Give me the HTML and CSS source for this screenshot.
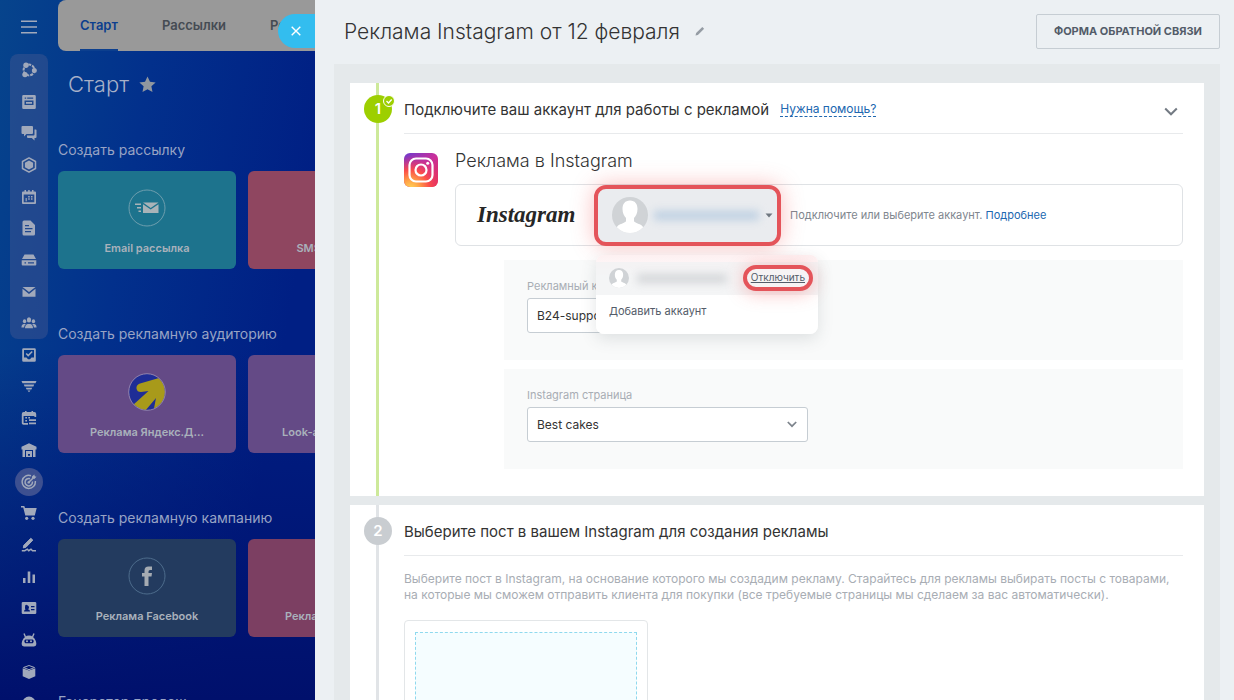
FILE: index.html
```html
<!DOCTYPE html>
<html lang="ru">
<head>
  <meta charset="UTF-8" />
  <title>Реклама Instagram</title>
  <link rel="stylesheet" href="styles.css">
</head>
<body>
  <nav class="rail">
    <a href="#" class="rail-menu" aria-label="Меню">
      <svg viewBox="0 0 14 12"><path d="M0 1h14M0 6h14M0 11h14" stroke="currentColor" stroke-width="1.4"/></svg>
    </a>
    <div class="rail-group">
      <a href="#"><svg viewBox="0 0 16 16"><circle cx="8" cy="8" r="5.4" fill="none" stroke="currentColor" stroke-width="2" stroke-dasharray="3 1"/><circle cx="5" cy="3.2" r="2.7"/><circle cx="13.3" cy="8.6" r="2.5"/><circle cx="4" cy="12.6" r="2.7"/><circle cx="8" cy="8" r="2.6" fill="#254b8c"/></svg></a>
      <a href="#"><svg viewBox="0 0 16 16"><path fill-rule="evenodd" d="M2.500 1h11q1.300 0 1.300 1.300v11.400q0 1.300-1.300 1.300h-11q-1.300 0-1.300-1.300V2.300Q1.200 1 2.500 1zM3.700 3.500v1.300h1.500V3.500zm2.500 0v1.300h6V3.500zM3.500 6.500V11h9V6.500zM5 8h6v1.700H5z"/></svg></a>
      <a href="#"><svg viewBox="0 0 16 16"><path d="M1.500 1h9.500q1 0 1 1v6q0 1-1 1H5.500L3 11.500V9H1.500q-1 0-1-1V2q0-1 1-1zM13.500 4.500h1.200q.8 0 .8.800V12q0 1-1 1h-1v2.500L10.800 13H7q-1 0-1-1v-1.500h6.500q1 0 1-1z"/></svg></a>
      <a href="#"><svg viewBox="0 0 16 16"><path d="M8 .9l6.500 3.600v7L8 15.100l-6.500-3.600v-7z" fill="none" stroke="currentColor" stroke-width="1.500" stroke-linejoin="round"/><path d="M8 3.500l4.100 2.300v4.400L8 12.500l-4.100-2.300V5.800z"/></svg></a>
      <a href="#"><svg viewBox="0 0 16 16"><path fill-rule="evenodd" d="M2 2.500h1.500V1H5v1.500h2.200V1h1.500v1.500H11V1h1.500v1.500H14q1 0 1 1V14q0 1-1 1H2q-1 0-1-1V3.500q0-1 1-1zM2.700 5.500v7.800h10.600V5.500z"/><path d="M4.500 9.200H6v1.500H4.500zM7.200 9.200h1.500v1.500H7.200zM7.200 7h1.500v1.500H7.200zM10 7h1.500v1.500H10zM10 9.200h1.500v1.500H10zM4.500 11.300H6v1H4.500z"/></svg></a>
      <a href="#"><svg viewBox="0 0 16 16"><path fill-rule="evenodd" d="M3 .5h6.500L14 5v9q0 1.500-1.500 1.500H3q-1.500 0-1.500-1.500V2Q1.500.5 3 .5zM4 5v1.300h4V5zm0 3v1.300h7.500V8zm0 3v1.300h6V11z"/></svg></a>
      <a href="#"><svg viewBox="0 0 16 16"><path fill-rule="evenodd" d="M3.500 2.500h9L15 7H1zM.7 8.300h14.600v4.200q0 1-1 1H1.700q-1 0-1-1zM3.500 10.300v1.300H5v-1.300zm3.500 0v1.300h6v-1.300z"/></svg></a>
      <a href="#"><svg viewBox="0 0 16 16"><path d="M1.500 3h13L8 8zM1.500 4.800L8 10l6.500-5.200v8h-13z"/></svg></a>
      <a href="#"><svg viewBox="0 0 18 16"><ellipse cx="9" cy="4.500" rx="2.400" ry="3"/><path d="M4.500 14q0-4 3-5h3q3 1 3 5z"/><ellipse cx="4" cy="6" rx="1.900" ry="2.300"/><path d="M.5 13q0-3.500 2.500-4h2.500q-2 1.500-2 4z"/><ellipse cx="14" cy="6" rx="1.900" ry="2.300"/><path d="M17.500 13q0-3.500-2.500-4h-2.500q2 1.500 2 4z"/></svg></a>
    </div>
    <div class="rail-list">
      <a href="#"><svg viewBox="0 0 16 16"><path fill-rule="evenodd" d="M2.500 1.200h11q1.300 0 1.300 1.300v11q0 1.300-1.300 1.300h-11q-1.300 0-1.300-1.300v-11q0-1.300 1.300-1.300zM3 3v7.500h2.500L7 12.300h2l1.500-1.800H13V3z"/><path d="M5.200 6.500l2 2 4-4" fill="none" stroke="currentColor" stroke-width="1.600"/></svg></a>
      <a href="#"><svg viewBox="0 0 16 16"><path d="M.5 3h15l-1 2.200h-13zM2.800 6.500h10.400l-.8 1.900H3.600zM4.800 9.700h6.400l-.8 1.800H5.600zM6.500 12.600h3L8 14.300z"/></svg></a>
      <a href="#"><svg viewBox="0 0 16 16"><path d="M7 13.800H2.600q-.9 0-.9-.9V4q0-1 1-1h10.600q1 0 1 1v3M2 5h12" fill="none" stroke="currentColor" stroke-width="1.800"/><path d="M4 1h1.600v3H4zM10.500 1h1.600v3h-1.600zM4.300 7H6v1.500H4.300zM7.300 7H9v1.500H7.300zM4.300 10H6v1.500H4.300zM8 9.300h7V11H8zM8 12.500h7v1.700H8z"/></svg></a>
      <a href="#"><svg viewBox="0 0 16 16"><path fill-rule="evenodd" d="M8 1.200l7.500 3.500V7.500h-1V15H12V8H4v7H1.500V7.500h-1V4.700z"/><path fill-rule="evenodd" d="M5 9h6v6H5zm2 3v1.800h2V12z"/></svg></a>
      <a href="#" class="active"><svg viewBox="0 0 16 16"><g fill="none" stroke="currentColor" stroke-width="1.500"><path d="M10 1.700A6.600 6.600 0 1 0 14.300 7"/><path d="M9 4.700A3.700 3.700 0 1 0 11.400 7.500"/><path d="M7.700 8.400l4.200-4.200"/></g><path d="M11 4.500V2.600L13.300.5l.5 1.700 1.700.6-2.200 2.300z"/><circle cx="7.700" cy="8.400" r="1.200"/></svg></a>
      <a href="#"><svg viewBox="0 0 16 16"><path d="M0 1h3.300l.7 2h11.700l-1.900 7.500H4.300L2.200 2.500H0z"/><circle cx="5.700" cy="13.300" r="1.600"/><circle cx="12" cy="13.300" r="1.600"/></svg></a>
      <a href="#"><svg viewBox="0 0 16 16"><path d="M9.800 1.300l2 1.800L5 10.200l-2.700.7.500-2.600z" stroke="currentColor" stroke-width="1"/><path d="M.8 13.700h3l2.500-1.500 1.500 1.500 2.200-1.500 1.500 1.500H15" fill="none" stroke="currentColor" stroke-width="1.500"/></svg></a>
      <a href="#"><svg viewBox="0 0 16 16"><path d="M2 9h2.500v5H2zM6.700 2.500h2.600V14H6.700zM11.500 5.500H14V14h-2.500z"/></svg></a>
      <a href="#"><svg viewBox="0 0 16 16"><path fill-rule="evenodd" d="M2 2h12q1.300 0 1.300 1v10q0 1-1.300 1H2q-1.300 0-1.300-1V3Q.7 2 2 2zM3 11.500h6Q9 9.700 7 9.200q1-.7 1-2T6 5 4 7.200t1 2q-2 .5-2 2.300zM10 6v1.300h3.500V6zm0 3v1.300h3.500V9z"/></svg></a>
      <a href="#"><svg viewBox="0 0 16 16"><path d="M4.500 5L3 1.500M11.500 5L13 1.500" stroke="currentColor" stroke-width="1.400"/><path fill-rule="evenodd" d="M8 3.500q4.500 0 6.800 5.500Q16.500 14.500 13 14.500H3Q-.5 14.500 1.200 9 3.500 3.500 8 3.500zM4.300 7.500q-2 1.700 0 3.700h7.400q2-2 0-3.700z"/><circle cx="6" cy="9.300" r="1"/><circle cx="10" cy="9.300" r="1"/></svg></a>
      <a href="#"><svg viewBox="0 0 16 16"><path d="M8 1.500l5.500 2L8 5.700 2.500 3.500z" fill="none" stroke="currentColor"/><path d="M1.700 4.200L8 6.500l6.300-2.300v8L8 15l-6.300-2.800z"/></svg></a>
      <a href="#"><svg viewBox="0 0 16 16"><circle cx="8" cy="8" r="6.500"/></svg></a>
    </div>
  </nav>

  <div class="workspace">
    <div class="tabs">
      <a href="#" class="tab current">Старт</a>
      <a href="#" class="tab">Рассылки</a>
      <a href="#" class="tab">Реклама</a>
    </div>
    <h1 class="page-title">Старт
      <svg viewBox="0 0 18 18"><path d="M9 .5l2.600 5.600 6 .7-4.500 4.100 1.200 6L9 14l-5.300 2.900 1.200-6L.4 6.800l6-.7z"/></svg>
    </h1>

    <section class="group">
      <h2>Создать рассылку</h2>
      <div class="tiles">
        <a href="#" class="tile teal">
          <svg viewBox="0 0 38 38"><circle cx="19" cy="19" r="18" fill="none" stroke="#6d9eae"/><path d="M15 13.500h15.500L22.700 19zM15 15.200l7.700 5.400 7.800-5.400V24H15zM7 14.500h6V16H7zM9 18h4v1.500H9zM10.500 21.500H13V23h-2.500z" fill="#a9b3b8"/></svg>
          <span>Email рассылка</span>
        </a>
        <a href="#" class="tile rose">
          <svg viewBox="0 0 38 38"><circle cx="19" cy="19" r="18" fill="none" stroke="#b98797"/></svg>
          <span>SMS рассылка</span>
        </a>
      </div>
    </section>

    <section class="group">
      <h2>Создать рекламную аудиторию</h2>
      <div class="tiles">
        <a href="#" class="tile violet">
          <svg viewBox="0 0 38 38">
            <clipPath id="disc"><circle cx="19" cy="19" r="18"/></clipPath>
            <circle cx="19" cy="19" r="18" fill="#1e2d96"/>
            <path clip-path="url(#disc)" d="M31 5l-19 5.500q-4 1.500-3.500 5T13 19l7.500-1L5 32l6 6h6l11-13-2.500 13H38V5z" fill="#a89a1a"/>
            <circle cx="19" cy="19" r="18.300" fill="none" stroke="#8d80ad"/>
          </svg>
          <span>Реклама Яндекс.Д...</span>
        </a>
        <a href="#" class="tile violet">
          <svg viewBox="0 0 38 38"><circle cx="19" cy="19" r="18" fill="none" stroke="#8d80ad"/></svg>
          <span>Look-alike Facebook</span>
        </a>
      </div>
    </section>

    <section class="group">
      <h2>Создать рекламную кампанию</h2>
      <div class="tiles">
        <a href="#" class="tile navy">
          <svg viewBox="0 0 38 38"><circle cx="19" cy="19" r="18" fill="none" stroke="#4d6c8c"/><path d="M16.500 29V19.500H14V16h2.500v-2.500q0-4 4-4H24V13h-2q-1.500 0-1.500 1.500V16H24l-.5 3.500h-3V29z" fill="#a5abb2"/></svg>
          <span>Реклама Facebook</span>
        </a>
        <a href="#" class="tile plum">
          <svg viewBox="0 0 38 38"><circle cx="19" cy="19" r="18" fill="none" stroke="#b98797"/></svg>
          <span>Реклама Instagram</span>
        </a>
      </div>
    </section>

    <section class="group">
      <h2>Генератор продаж</h2>
    </section>
  </div>

  <main class="slider">
    <button class="slider-close" aria-label="Закрыть">
      <svg viewBox="0 0 10 10"><path d="M.7.7l8.600 8.600M9.300.7L.7 9.300" stroke="#fff" stroke-width="1.400"/></svg>
    </button>

    <header class="slider-head">
      <h1>Реклама Instagram от 12 февраля</h1>
      <svg class="pencil" viewBox="0 0 10 10"><path d="M.5 9.500l.6-2.400L7.300.9l1.800 1.800-6.200 6.200z" fill="#959ca4"/></svg>
      <button class="feedback">ФОРМА ОБРАТНОЙ СВЯЗИ</button>
    </header>

    <div class="steps">
      <section class="step done">
        <div class="marker">1
          <svg class="tick" viewBox="0 0 12 12"><circle cx="6" cy="6" r="5.500" fill="#9dcf00" stroke="#fff"/><path d="M3.500 6l2 2 3.200-3.500" fill="none" stroke="#fff" stroke-width="1.300"/></svg>
        </div>
        <div class="step-head">
          <h2>Подключите ваш аккаунт для работы с рекламой</h2>
          <a href="#" class="help">Нужна помощь?</a>
          <svg class="chevron" viewBox="0 0 14 9"><path d="M1.200 1.500L7 7.300l5.800-5.800" fill="none" stroke="#737a83" stroke-width="2"/></svg>
        </div>

        <div class="connect">
          <svg class="insta" viewBox="0 0 34 34">
            <defs>
              <linearGradient id="base" x1="0" y1="0" x2="1" y2="1"><stop offset="0" stop-color="#6a3bd0"/><stop offset=".5" stop-color="#c92f9b"/><stop offset="1" stop-color="#e8304f"/></linearGradient>
              <radialGradient id="warm" cx=".2" cy="1.050" r="1"><stop offset="0" stop-color="#ffd65a"/><stop offset=".25" stop-color="#ffa347"/><stop offset=".55" stop-color="#fb4d48"/><stop offset="1" stop-color="#e02c7c" stop-opacity="0"/></radialGradient>
            </defs>
            <rect width="34" height="34" rx="6" fill="url(#base)"/>
            <rect width="34" height="34" rx="6" fill="url(#warm)"/>
            <g fill="none" stroke="#fff" stroke-width="2.200"><rect x="5.500" y="5.500" width="23" height="23" rx="6.500"/><circle cx="17" cy="17" r="5.500"/></g>
            <circle cx="23.700" cy="10.300" r="1.500" fill="#fff"/>
          </svg>
          <div class="connect-body">
            <h3>Реклама в Instagram</h3>
            <div class="account-bar">
              <span class="wordmark">Instagram</span>
              <div class="account">
                <button class="account-button" aria-label="Аккаунт">
                  <svg class="avatar" viewBox="0 0 36 36"><clipPath id="round"><circle cx="18" cy="18" r="18"/></clipPath><g clip-path="url(#round)"><rect width="36" height="36" fill="#d0d3d6"/><path d="M18 3.500c5 0 7.500 3.500 7.500 8.500 0 4-1.500 7-3.500 9v3c0 2 8 3 9 6v8H5v-8c1-3 9-4 9-6v-3c-2-2-3.500-5-3.500-9 0-5 2.500-8.500 7.500-8.500z" fill="#fff"/></g></svg>
                  <span class="hidden-name"></span>
                  <svg class="caret" viewBox="0 0 8 5"><path d="M.5.500h7L4 4.500z" fill="#6f7780"/></svg>
                </button>
                <div class="menu">
                  <div class="menu-user">
                    <svg class="avatar" viewBox="0 0 36 36"><g clip-path="url(#round)"><rect width="36" height="36" fill="#d0d3d6"/><path d="M18 3.500c5 0 7.500 3.500 7.500 8.500 0 4-1.500 7-3.500 9v3c0 2 8 3 9 6v8H5v-8c1-3 9-4 9-6v-3c-2-2-3.500-5-3.500-9 0-5 2.500-8.500 7.500-8.500z" fill="#fff"/></g></svg>
                    <span class="hidden-name"></span>
                    <a href="#" class="disconnect">Отключить</a>
                  </div>
                  <a href="#" class="menu-add">Добавить аккаунт</a>
                </div>
              </div>
              <p>Подключите или выберите аккаунт. <a href="#">Подробнее</a></p>
            </div>
          </div>
        </div>

        <div class="field">
          <label for="cabinet">Рекламный кабинет</label>
          <div class="select">
            <select id="cabinet"><option>B24-support</option></select>
            <svg viewBox="0 0 10 7"><path d="M.8 1L5 5.200 9.200 1" fill="none" stroke="#7d848c" stroke-width="1.700"/></svg>
          </div>
        </div>
        <div class="field">
          <label for="page">Instagram страница</label>
          <div class="select">
            <select id="page"><option>Best cakes</option></select>
            <svg viewBox="0 0 10 7"><path d="M.8 1L5 5.200 9.200 1" fill="none" stroke="#7d848c" stroke-width="1.700"/></svg>
          </div>
        </div>
      </section>

      <section class="step">
        <div class="marker">2</div>
        <div class="step-head">
          <h2>Выберите пост в вашем Instagram для создания рекламы</h2>
        </div>
        <p class="hint">Выберите пост в Instagram, на основание которого мы создадим рекламу. Старайтесь для рекламы выбирать посты с товарами, на которые мы сможем отправить клиента для покупки (все требуемые страницы мы сделаем за вас автоматически).</p>
        <div class="post"><div class="post-drop"></div></div>
      </section>
    </div>
  </main>
</body>
</html>
```
FILE: styles.css
```css
* {
  box-sizing: border-box;
}

body {
  margin: 0;
  height: 100vh;
  overflow: hidden;
  display: flex;
  font-family: Inter, "Liberation Sans", sans-serif;
  background:
    linear-gradient(rgba(0, 13, 106, 0) 50%, #00106c 100%),
    linear-gradient(100deg, #06448c 0, #02308c 160px, #001f84 340px);
}

h1, h2, h3, p {
  margin: 0;
  font-weight: 400;
}

a {
  text-decoration: none;
}

svg {
  display: block;
  flex: none;
}

/* left icon rail */
.rail {
  flex: 0 0 58px;
  padding: 0 10px;
  color: #a1a9bb;
}

.rail a {
  flex: 1;
  display: flex;
  align-items: center;
  justify-content: center;
  color: inherit;
}

.rail svg {
  width: 16px;
  height: 16px;
  fill: currentColor;
}

.rail .rail-menu {
  height: 54px;
}

.rail-group {
  height: 285px;
  display: flex;
  flex-direction: column;
  background: rgba(75, 90, 145, 0.42);
  border-radius: 8px;
}

.rail-list {
  height: 380px;
  display: flex;
  flex-direction: column;
}

.rail .active {
  flex: none;
  width: 28px;
  height: 28px;
  margin: 2px auto;
  border-radius: 50%;
  background: #3d5090;
}

/* page under the slider */
.workspace {
  flex: 0 0 257px;
  overflow: hidden;
}

.tabs {
  height: 51px;
  width: 600px;
  padding-left: 22px;
  display: flex;
  gap: 44px;
  background: #999;
  border-radius: 8px;
}

.tab {
  line-height: 50px;
  font-size: 13px;
  font-weight: 600;
  color: #454b53;
}

.tab.current {
  color: #0c3f8e;
  border-bottom: 2px solid #0c3f8e;
}

.page-title {
  display: flex;
  align-items: center;
  gap: 10px;
  padding: 18px 0 0 10px;
  font-size: 22px;
  line-height: 30px;
  font-weight: 300;
  color: #a7b0c8;
}

.page-title svg {
  width: 17px;
  height: 17px;
  fill: #90979f;
}

.group {
  height: 184px;
}

.page-title + .group {
  margin-top: 40px;
}

.group h2 {
  font-size: 14px;
  line-height: 22px;
  margin-bottom: 10px;
  color: #98a3c4;
}

.tiles {
  display: flex;
  gap: 12px;
}

.tile {
  flex: 0 0 178px;
  height: 98px;
  padding-top: 18px;
  border-radius: 6px;
  display: flex;
  flex-direction: column;
  align-items: center;
  gap: 12px;
  font-size: 11px;
  line-height: 18px;
  font-weight: 600;
  color: #a9b1bb;
}

.tile svg {
  width: 38px;
  height: 38px;
}

.teal { background: #1d738d; }
.rose { background: #8f4660; }
.violet { background: #644a86; }
.navy { background: #233b5f; }
.plum { background: #7c3f62; }

/* slider panel */
.slider {
  flex: 1;
  min-width: 0;
  position: relative;
  background: #ecf0f3;
  color: #333;
}

.slider-close {
  position: absolute;
  left: -37px;
  top: 14px;
  width: 37px;
  height: 34px;
  padding: 0 0 0 13px;
  border: 0;
  border-radius: 17px 0 0 17px;
  background: #33bdef;
}

.slider-close svg {
  width: 10px;
  height: 10px;
}

.slider-head {
  height: 64px;
  padding: 0 14px 2px 29px;
  display: flex;
  align-items: center;
}

.slider-head h1 {
  font-size: 21px;
  font-weight: 300;
}

.pencil {
  width: 10px;
  height: 10px;
  margin-left: 15px;
}

.feedback {
  margin-left: auto;
  height: 35px;
  padding: 0 17px;
  border: 1px solid #c6cdd3;
  border-radius: 2px;
  background: none;
  font: 700 11px Inter, sans-serif;
  color: #535c69;
}

.steps {
  margin: 0 14px 0 19px;
  padding: 19px 16px 0;
  height: calc(100vh - 64px);
  overflow: hidden;
  background: #e5e9eb;
}

.step {
  position: relative;
  padding: 0 21px 27px 54px;
  margin-bottom: 9px;
  background: linear-gradient(#e1e4e7, #e1e4e7) 26px 0 / 3px 100% no-repeat #fff;
}

.step.done {
  background-image: linear-gradient(#cde99a, #cde99a);
}

.marker {
  position: absolute;
  left: 14px;
  top: 12px;
  width: 28px;
  height: 28px;
  border-radius: 50%;
  background: #c9cdd1;
  color: #fff;
  font-size: 15px;
  line-height: 28px;
  font-weight: 600;
  text-align: center;
}

.done .marker {
  background: #9dcf00;
}

.tick {
  position: absolute;
  right: -3px;
  top: 0;
  width: 12px;
  height: 12px;
}

.step-head {
  height: 51px;
  padding-top: 2px;
  display: flex;
  align-items: center;
  border-bottom: 1px solid #e8eaec;
}

.step-head h2 {
  font-size: 15px;
}

.help {
  margin-left: 11px;
  font-size: 12px;
  line-height: 15px;
  color: #2067b0;
  border-bottom: 1px dashed #2067b0;
}

.chevron {
  width: 14px;
  height: 9px;
  margin: 4px 5px 0 auto;
}

.connect {
  display: flex;
  gap: 17px;
  padding-top: 15px;
}

.insta {
  width: 34px;
  height: 34px;
  margin-top: 4px;
}

.connect-body {
  flex: 1;
}

.connect h3 {
  font-size: 18px;
  line-height: 24px;
  margin-bottom: 11px;
  font-weight: 300;
}

.account-bar {
  height: 62px;
  display: flex;
  align-items: center;
  border: 1px solid #dfe2e5;
  border-radius: 6px;
}

.account-bar p {
  margin-left: 9px;
  font-size: 11px;
  color: #80868e;
}

.account-bar p a {
  color: #2067b0;
}

.wordmark {
  width: 138px;
  padding-left: 21px;
  font: italic 700 23px "Liberation Serif", serif;
  color: #262626;
}

.account {
  position: relative;
}

.account-button {
  width: 187px;
  height: 61px;
  padding: 0 4px 0 14px;
  display: flex;
  align-items: center;
  border: 4px solid #e4545a;
  border-radius: 12px;
  background: #eaecef;
  box-shadow: 0 0 22px rgba(240, 70, 70, 0.35);
}

.account-button .avatar {
  width: 36px;
  height: 36px;
}

.account-button .hidden-name {
  flex: 1;
  height: 9px;
  margin: 0 6px;
  background: #bccfe2;
  filter: blur(4px);
}

.caret {
  width: 8px;
  height: 5px;
}

.menu {
  position: absolute;
  z-index: 1;
  left: 2px;
  top: 70px;
  width: 222px;
  padding-top: 7px;
  border-radius: 8px;
  background: linear-gradient(#fdf0f1, #fff 24px);
  box-shadow: 0 5px 16px rgba(70, 80, 90, 0.15);
}

.menu-user {
  height: 33px;
  padding: 0 5px 0 13px;
  display: flex;
  align-items: center;
  background: rgba(240, 241, 243, 0.75);
}

.menu-user .avatar {
  width: 20px;
  height: 20px;
}

.menu-user .hidden-name {
  flex: 1;
  height: 9px;
  margin: 0 16px 0 8px;
  background: #d3d5d8;
  filter: blur(4px);
}

.disconnect {
  height: 26px;
  padding: 0 4px;
  border: 4px solid #e4545a;
  border-radius: 13px;
  background: #f6f3f4;
  box-shadow: 0 2px 18px rgba(240, 70, 70, 0.35);
  font-size: 10px;
  line-height: 16px;
  text-decoration: underline;
  color: #535c69;
}

.menu-add {
  display: block;
  padding: 8px 13px 15px;
  font-size: 11px;
  line-height: 16px;
  color: #535c69;
}

.field {
  height: 100px;
  margin: 9px 0 0 100px;
  padding: 17px 23px 0;
  background: #f9fafa;
}

.connect + .field {
  margin-top: 14px;
}

.field label {
  display: block;
  margin-bottom: 3px;
  font-size: 11px;
  line-height: 18px;
  color: #a8adb4;
}

.select {
  position: relative;
  max-width: 281px;
}

.select select {
  appearance: none;
  width: 100%;
  height: 35px;
  padding: 0 9px;
  border: 1px solid #c6cdd3;
  border-radius: 3px;
  background: #fff;
  font: 12px Inter, sans-serif;
  color: #333;
}

.select svg {
  position: absolute;
  right: 11px;
  top: 14px;
  width: 10px;
  height: 7px;
}

.hint {
  padding: 15px 0 17px;
  font-size: 12px;
  line-height: 16px;
  color: #a8adb4;
}

.post {
  width: 244px;
  height: 240px;
  padding: 11px 10px;
  border: 1px solid #e3e6e8;
  border-radius: 4px;
}

.post-drop {
  height: 100%;
  border: 1px dashed #8fd9ee;
  background: #f5fdff;
}
```
